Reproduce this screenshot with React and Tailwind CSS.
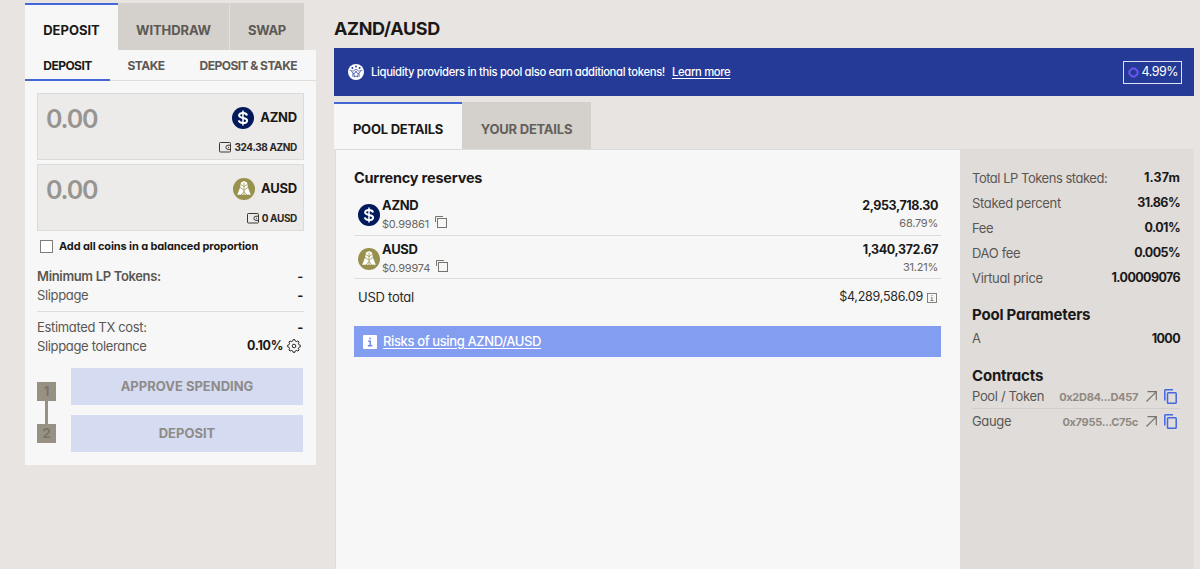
import clsx from "clsx";

function DollarCoin() {
  return (
    <svg className="size-[22px] shrink-0" viewBox="0 0 22 22" fill="none">
      <circle cx="11" cy="11" r="11" fill="#021a5c" />
      <path
        d="M15 8.4C14.6 6.7 13 6 11 6C8.7 6 7.1 6.9 7.1 8.6C7.1 11.8 15.1 10 15.1 13.4C15.1 15.1 13.4 16 11 16C8.7 16 7.1 15.2 6.7 13.4"
        stroke="#fff"
        strokeWidth="2"
      />
      <path d="M11 3.4V18.6" stroke="#fff" strokeWidth="1.5" />
    </svg>
  );
}

function GoldCoin() {
  return (
    <svg className="size-[22px] shrink-0" viewBox="0 0 22 22" fill="none">
      <circle cx="11" cy="11" r="11" fill="#97914d" />
      <path d="M8 4.6L11 3L14 4.6L15 9.8H7Z" fill="#fff" />
      <path d="M7 9.8L11 8.8L15 9.8L17.8 16.8H4.2Z" fill="#fff" />
      <path d="M11 4.5V17M8 6.6L11 8.6L14 6.6M7 9.4L11 12.2L15 9.4M8 17L11 13.6L14 17" stroke="#97914d" strokeWidth="0.75" />
    </svg>
  );
}

function WalletIcon() {
  return (
    <svg className="w-3 h-[11px] shrink-0" viewBox="0 0 12 11" fill="none" stroke="#3b3936">
      <rect x="0.5" y="0.5" width="11" height="9.5" rx="0.8" />
      <path d="M11.5 3.2H9A2.1 2.1 0 0 0 9 7.4H11.5M9 5.3H10" />
    </svg>
  );
}

function CopyThin() {
  return (
    <svg className="mt-[2px] size-3 shrink-0" viewBox="0 0 12 12" fill="none" stroke="#77746f">
      <path d="M0.5 6V0.5H8" />
      <rect x="2.5" y="2.5" width="9" height="9" />
    </svg>
  );
}

function CopyBlue() {
  return (
    <svg className="-mt-[1px] w-[13px] h-[15px] shrink-0" viewBox="0 0 13 15" fill="none" stroke="#4467e3" strokeWidth="1.5">
      <path d="M0.8 11.5V1.5Q0.8 0.8 1.5 0.8H9" />
      <rect x="3.5" y="3.7" width="8.7" height="10.5" rx="0.8" />
    </svg>
  );
}

function ArrowUpRight() {
  return (
    <svg className="-mt-[1px] size-[11px] shrink-0" viewBox="0 0 11 11" fill="none" stroke="#77736b" strokeWidth="1.2">
      <path d="M0.5 10.5L10.2 0.8M1.5 0.7H10.3V9.2" />
    </svg>
  );
}

function GearIcon() {
  return (
    <svg className="-mt-[1px] size-[14px] shrink-0" viewBox="0 0 14 14" fill="none" stroke="#2b2a28" strokeLinejoin="round">
      <path d="M5.9 1.9L6.2 0.6H7.8L8.1 1.9L9.8 2.6L10.9 1.9L12.1 3.1L11.4 4.2L12.1 5.9L13.4 6.2V7.8L12.1 8.1L11.4 9.8L12.1 10.9L10.9 12.1L9.8 11.4L8.1 12.1L7.8 13.4H6.2L5.9 12.1L4.2 11.4L3.1 12.1L1.9 10.9L2.6 9.8L1.9 8.1L0.6 7.8V6.2L1.9 5.9L2.6 4.2L1.9 3.1L3.1 1.9L4.2 2.6Z" />
      <circle cx="7" cy="7" r="1.8" />
    </svg>
  );
}

function RewardsIcon() {
  return (
    <svg className="size-4 shrink-0" viewBox="0 0 16 16" fill="none">
      <circle cx="8" cy="8" r="8" fill="#fff" />
      <g fill="#243a96">
        <circle cx="4.4" cy="4" r="1" />
        <circle cx="8" cy="2.5" r="0.9" />
        <circle cx="11.6" cy="4" r="1" />
      </g>
      <path
        d="M1.8 6.2L5 7.2L8 5.2L11 7.2L14.2 6.2M3.4 7.4L5 9.2L4.8 12.8M12.6 7.4L11 9.2L11.2 12.8M8 7L9 9.1L11 9.5L9.6 10.9L9.9 13L8 12L6.1 13L6.4 10.9L5 9.5L7 9.1Z"
        stroke="#243a96"
        strokeWidth="0.7"
      />
    </svg>
  );
}

function InfoBox() {
  return (
    <svg className="size-[10px] shrink-0" viewBox="0 0 10 10" fill="none" stroke="#77746f" strokeWidth="0.9">
      <rect x="0.5" y="0.5" width="9" height="9" />
      <path d="M5 2V3.2M3.9 4.6H5V7.4M3.5 7.5H6.5" />
    </svg>
  );
}

function CoinInput({ coin, symbol, balance, className }) {
  return (
    <div className={clsx("flex justify-between border border-[#dddbd8] bg-[#edebe9] pl-[8px] pr-[6px]", className)}>
      <div className="pt-[8px] text-[25px] leading-[34px] font-semibold tracking-[-1.2px] text-[#979592]">0.00</div>
      <div className="flex flex-col items-end">
        <div className="mt-[13px] flex h-[22px] items-center gap-[6px] text-[13px] font-bold tracking-[-0.2px] text-[#1a1918]">
          {coin}
          {symbol}
        </div>
        <div className="mt-[10px] flex h-4 items-center gap-[3px] text-[10px] font-bold tracking-[-0.35px] text-[#2a2927]">
          <WalletIcon />
          {balance}
        </div>
      </div>
    </div>
  );
}

function Row({ label, value, className }) {
  return (
    <div className={clsx("flex items-center justify-between tracking-[-0.34px]", className)}>
      <span className="text-[#5a5753]">{label}</span>
      <span className="font-bold text-[#1a1918]">{value}</span>
    </div>
  );
}

function DepositPanel() {
  return (
    <section className="mt-[3px] ml-[25px] w-[291px] shrink-0">
      <div className="flex h-[47px] text-[13px] font-bold text-[#5c5955]">
        <div className="flex w-[93px] items-center justify-center border-t-2 border-[#4467d8] bg-[#f7f7f7] pt-[6px] text-[#1a1918]">
          DEPOSIT
        </div>
        <div className="flex w-[111px] items-center justify-center bg-[#d4d0cb] pt-2 tracking-[-0.1px]">WITHDRAW</div>
        <div className="flex w-[75px] items-center justify-center border-l border-[#e3e0dc] bg-[#d4d0cb] pt-2 tracking-[-0.3px]">
          SWAP
        </div>
      </div>
      <div className="h-[415px] bg-[#f7f7f7]">
        <div className="flex h-[31px] border-b border-[#e0dedb] text-[12px] font-bold tracking-[-0.55px] text-[#5c5955]">
          <div className="flex h-[31px] w-[85px] items-center justify-center border-b-2 border-[#4467d8] pt-[2px] text-[#1a1918]">
            DEPOSIT
          </div>
          <div className="flex w-[72px] items-center justify-center pt-[1px]">STAKE</div>
          <div className="flex flex-1 items-center justify-end pt-[1px] pr-[19px]">DEPOSIT &amp; STAKE</div>
        </div>
        <div className="pt-3 pr-3 pl-[12px]">
          <CoinInput className="h-[67px]" coin={<DollarCoin />} symbol="AZND" balance="324.38 AZND" />
          <CoinInput className="mt-1 h-[67px]" coin={<GoldCoin />} symbol="AUSD" balance="0 AUSD" />
          <div className="mt-[5px] ml-[3px] flex h-5 items-center gap-[6px] text-[11px] font-bold tracking-[-0.12px] text-[#1a1918]">
            <span className="size-[13px] border-[1.5px] border-[#807d78] bg-white" />
            Add all coins in a balanced proportion
          </div>
          <div className="mt-[11px] text-[13px]">
            <Row className="h-[19px] pr-[1px] tracking-[-0.29px] [&>span]:font-semibold" label="Minimum LP Tokens:" value="-" />
            <Row className="h-[19px] pr-[1px]" label="Slippage" value="-" />
          </div>
          <div className="mt-[6px] border-t border-[#dedcd9] pt-[6px] text-[13px]">
            <Row className="h-[19px] pr-[1px]" label="Estimated TX cost:" value="-" />
            <Row
              className="h-[19px] pr-[3px]"
              label="Slippage tolerance"
              value={
                <span className="flex items-center gap-1 text-[12.5px]">
                  0.10% <GearIcon />
                </span>
              }
            />
          </div>
          <div className="mt-[12px] flex pr-[1px] text-[13px] font-bold">
            <div className="mt-[14px] flex w-[34px] flex-col">
              <span className="flex size-[19px] items-center justify-center bg-[#979183] text-[#797469]">1</span>
              <span className="ml-2 h-[23px] w-[3px] bg-[#979183]" />
              <span className="flex size-[19px] items-center justify-center bg-[#979183] text-[#797469]">2</span>
            </div>
            <div className="flex-1 text-[#8e8b89]">
              <button className="block h-[37px] w-full bg-[#d5dbf1]">APPROVE SPENDING</button>
              <button className="mt-[10px] block h-[37px] w-full bg-[#d5dbf1]">DEPOSIT</button>
            </div>
          </div>
        </div>
      </div>
    </section>
  );
}

function Reserve({ coin, symbol, price, amount, percent }) {
  return (
    <div className="flex h-[43.5px] justify-between border-b border-[#dedcdb] pr-[3px] pl-[4px]">
      <div className="flex">
        <div className="mt-[12px]">{coin}</div>
        <div className="ml-[2px]">
          <div className="mt-[4px] h-[18px] text-[13px] leading-[18px] font-bold tracking-[-0.3px] text-[#1a1918]">{symbol}</div>
          <div className="flex h-[18px] gap-[6px] text-[11px] leading-[21px] tracking-[-0.2px] text-[#6a6764]">
            {price}
            <CopyThin />
          </div>
        </div>
      </div>
      <div className="text-right">
        <div className="mt-[5px] text-[12.5px] leading-[18px] font-bold tracking-[-0.4px] text-[#1a1918]">{amount}</div>
        <div className="text-[11px] leading-[17px] tracking-[-0.25px] text-[#6a6764]">{percent}</div>
      </div>
    </div>
  );
}

function Contract({ label, address, className }) {
  return (
    <div className={clsx("flex items-center", className)}>
      <span className="tracking-[-0.35px] text-[#5a5753]">{label}</span>
      <span className="mr-[8px] ml-auto text-[11px] font-bold tracking-[-0.3px] text-[#8f8982]">{address}</span>
      <ArrowUpRight />
      <span className="mr-[3px] ml-[7px]">
        <CopyBlue />
      </span>
    </div>
  );
}

const stats = [
  [<span className="tracking-[-0.48px]">Total LP Tokens staked:</span>, <span className="tracking-[0.1px]">1.37m</span>],
  ["Staked percent", "31.86%"],
  ["Fee", "0.01%"],
  ["DAO fee", "0.005%"],
  ["Virtual price", "1.00009076"],
];

const valueText = "[&>span:last-child]:text-[12.5px] [&>span:last-child]:tracking-[-0.6px]";

function PoolStats() {
  return (
    <aside className="w-[234px] shrink-0 bg-[#e0dcd9] pt-4 pr-[14px] pl-3 text-[13px]">
      {stats.map(([label, value], i) => (
        <Row key={i} className={clsx("h-[25px]", valueText)} label={label} value={value} />
      ))}
      <h3 className="mt-[14px] text-[15px] leading-5 font-bold tracking-[-0.2px] text-[#1a1918]">Pool Parameters</h3>
      <Row className={clsx("mt-[4px] h-5", valueText)} label="A" value="1000" />
      <h3 className="mt-[17px] text-[15px] leading-5 font-bold tracking-[-0.2px] text-[#1a1918]">Contracts</h3>
      <Contract className="h-[23px] border-b border-[#d1cdc9]" label="Pool / Token" address="0x2D84...D457" />
      <Contract className="h-[26px]" label="Gauge" address="0x7955...C75c" />
    </aside>
  );
}

export default function App() {
  return (
    <div className="flex h-[569px] w-[1200px] overflow-hidden bg-[#e8e4e1] font-['Inter','Liberation_Sans',sans-serif] [font-feature-settings:'cv11']">
      <DepositPanel />
      <main className="ml-[18px] flex w-[860px] shrink-0 flex-col">
        <h1 className="mt-[17px] text-[18px] leading-6 font-bold tracking-[-0.35px] text-[#1a1918]">AZND/AUSD</h1>
        <div className="mt-[7px] flex h-12 shrink-0 items-center bg-[#243a96] pr-3 pl-[14px] text-[11.25px] font-medium tracking-[-0.33px] text-white">
          <RewardsIcon />
          <span className="mt-[1px] ml-[7px]">Liquidity providers in this pool also earn additional tokens!</span>
          <a className="mt-[1px] ml-[7px] underline underline-offset-2">Learn more</a>
          <div className="ml-auto flex h-[23px] items-center gap-[3px] border border-white/85 pr-[3px] pl-[4px] text-[12.5px] font-normal tracking-[-0.5px]">
            <svg className="size-[11px]" viewBox="0 0 11 11" fill="none" stroke="#6a55f2" strokeWidth="2">
              <path d="M4.2 1.4H6.8L9.6 4.2V6.8L6.8 9.6H4.2L1.4 6.8V4.2Z" />
            </svg>
            <span className="pt-[1px]">4.99%</span>
          </div>
        </div>
        <div className="mt-[6px] flex h-[47px] shrink-0 text-[13px] font-bold tracking-[-0.23px]">
          <div className="flex w-32 items-center justify-center border-t-2 border-[#4467d8] bg-[#f7f7f7] pt-[6px] text-[#1a1918]">
            POOL DETAILS
          </div>
          <div className="flex w-[129px] items-center justify-center bg-[#d4d0cb] pt-[8px] text-[#63605c]">YOUR DETAILS</div>
        </div>
        <div className="ml-[1px] flex flex-1 border-t border-l border-[#dedbd8]">
          <div className="flex-1 bg-[#f7f7f7] pr-[19px] pl-[18px]">
            <h2 className="mt-[18px] mb-[4px] text-[14.5px] leading-5 font-bold tracking-[-0.2px] text-[#1a1918]">
              Currency reserves
            </h2>
            <Reserve coin={<DollarCoin />} symbol="AZND" price="$0.99861" amount="2,953,718.30" percent="68.79%" />
            <Reserve coin={<GoldCoin />} symbol="AUSD" price="$0.99974" amount="1,340,372.67" percent="31.21%" />
            <div className="flex h-[37px] items-center justify-between px-[4px] text-[13px] tracking-[-0.25px] text-[#2b2a28]">
              <span>USD total</span>
              <span className="flex items-center gap-1 text-[12.5px]">
                $4,289,586.09 <InfoBox />
              </span>
            </div>
            <div className="mt-[10px] flex h-[31px] items-center gap-[6px] bg-[#839df0] pl-[9px] text-[13px] font-medium tracking-[-0.38px] text-white">
              <svg className="size-[14px]" viewBox="0 0 14 14" fill="none">
                <rect width="14" height="14" rx="1" fill="#fff" />
                <path d="M7 2.8V4.6M5.2 6.3H7.2V10.5M4.8 10.8H9.3" stroke="#6d8ae8" strokeWidth="1.5" />
              </svg>
              <a className="underline underline-offset-2">Risks of using AZND/AUSD</a>
            </div>
          </div>
          <PoolStats />
        </div>
      </main>
    </div>
  );
}
